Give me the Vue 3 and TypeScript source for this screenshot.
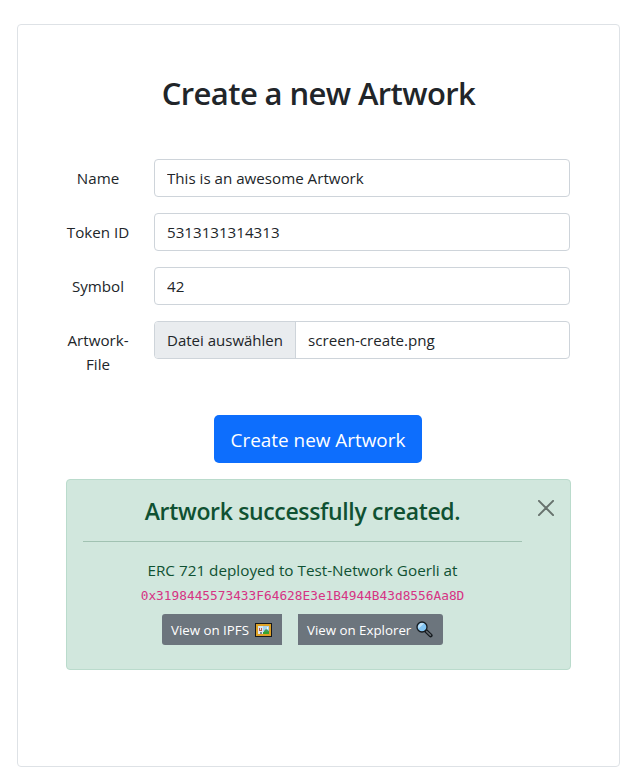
<script setup lang="ts">
import { ref } from 'vue'

interface Field {
  id: string
  label: string
  value: string
}

const fields = ref<Field[]>([
  { id: 'name', label: 'Name', value: 'This is an awesome Artwork' },
  { id: 'token', label: 'Token ID', value: '5313131314313' },
  { id: 'symbol', label: 'Symbol', value: '42' },
])
const fileName = ref('screen-create.png')
const address = ref('0x3198445573433F64628E3e1B4944B43d8556Aa8D')
const showAlert = ref(true)
</script>

<template>
  <main class="card">
    <h2 class="title"><span>Create a new Artwork</span></h2>

    <form class="form" @submit.prevent="showAlert = true">
      <div v-for="field in fields" :key="field.id" class="row">
        <label class="label" :for="field.id">{{ field.label }}</label>
        <input :id="field.id" v-model="field.value" class="control" type="text" />
      </div>
      <div class="row">
        <span class="label">Artwork-<br />File</span>
        <div class="control file">
          <button class="choose" type="button"><span>Datei auswählen</span></button>
          <span class="filename">{{ fileName }}</span>
        </div>
      </div>
      <button class="submit" type="submit"><span>Create new Artwork</span></button>
    </form>

    <section v-if="showAlert" class="alert">
      <h4 class="heading"><span>Artwork successfully created.</span></h4>
      <hr class="rule" />
      <p class="message"><span>ERC 721 deployed to Test-Network Goerli at</span></p>
      <code class="address">{{ address }}</code>
      <div class="actions">
        <button class="action ipfs" type="button">
          <span>View on IPFS</span>
          <svg class="frame" width="17" height="14" viewBox="0 0 17 14">
            <rect width="17" height="14" fill="#16191c" />
            <rect x="1" y="1" width="15" height="12" fill="#dda126" />
            <rect x="3" y="3" width="11" height="8" fill="#a9d4ee" />
            <path d="M3 3h5v2H3z" fill="#d2e8f3" />
            <path d="M9 8l2-2 3 2v3H9z" fill="#3f9d55" />
            <path d="M8 9h6v2H8z" fill="#35a52f" />
            <path d="M3 5h5v6H3z" fill="#e4e8ec" />
            <path d="M4 5h1v3H4zM6 5h1v3H6zM5 7h1v1H5z" fill="#b65b54" />
            <path d="M5 9h2v2H5z" fill="#7d8390" />
            <path d="M12 4h1v2h-1z" fill="#f3faff" />
          </svg>
        </button>
        <button class="action explorer" type="button">
          <span>View on Explorer</span>
          <svg class="lens" width="17" height="17" viewBox="0 0 17 17">
            <path d="M9.4 9.4l5.2 5" stroke="#151a1e" stroke-width="4" stroke-linecap="round" />
            <path d="M10.6 10.5l3.8 3.7" stroke="#646a70" stroke-width="1.7" stroke-linecap="round" />
            <circle cx="6" cy="6" r="5" fill="#83c5f3" stroke="#151a1e" stroke-width="1.3" />
            <path d="M2.4 7.7A4 4 0 0 1 8 2.6z" fill="#c2e3f8" />
          </svg>
        </button>
      </div>
      <button class="close" type="button" aria-label="Close" @click="showAlert = false">
        <svg width="16" height="16" viewBox="0 0 16 16">
          <path d="M.9.9l14.2 14.2M15.1.9L.9 15.1" stroke="#000" stroke-width="2" stroke-linecap="round" />
        </svg>
      </button>
    </section>
  </main>
</template>

<style>
body {
  background: #fff;
}
</style>

<style scoped>
.card,
.card * {
  box-sizing: border-box;
}

.card {
  width: 603px;
  height: 743px;
  margin: 24px 0 0 17px;
  padding: 49px 48px 48px;
  border: 1px solid #dee2e6;
  border-radius: 4px;
  color: #212529;
  font: 15.15px/24px 'Open Sans', 'Noto Sans', sans-serif;
}

button,
input {
  font: inherit;
  color: inherit;
}

.title {
  margin: 0 0 47px;
  font-size: 31px;
  font-weight: 600;
  letter-spacing: -0.6px;
  line-height: 38px;
  text-align: center;
  white-space: nowrap;
}

.form {
  display: flex;
  flex-direction: column;
  gap: 16px;
}

.row {
  display: grid;
  grid-template-columns: 64px 416px;
  column-gap: 24px;
  align-items: start;
}

.label {
  padding-top: 7px;
  text-align: center;
  white-space: nowrap;
}

.control {
  width: 100%;
  height: 38px;
  padding: 6px 12px;
  border: 1px solid #ced4da;
  border-radius: 4px;
  background: #fff;
  outline: none;
}

.file {
  display: flex;
  padding: 0;
  overflow: hidden;
}

.choose {
  width: 141px;
  padding: 0;
  border: 0;
  border-right: 1px solid #ced4da;
  background: #e9ecef;
  font-size: 15px;
  white-space: nowrap;
}

.filename {
  padding: 6px 12px;
}

.submit {
  align-self: center;
  width: 208px;
  height: 48px;
  margin: 23px 1px 0 0;
  padding: 2px 0 0;
  border: 0;
  border-radius: 5px;
  background: #0d6efd;
  color: #fff;
  font-size: 18.9px;
  white-space: nowrap;
}

.alert {
  position: relative;
  display: flex;
  flex-direction: column;
  align-items: center;
  width: 505px;
  height: 191px;
  margin-top: 16px;
  padding: 17px 48px 16px 16px;
  border: 1px solid #badbcc;
  border-radius: 4px;
  background: #d1e7dd;
  color: #0f5132;
}

.heading {
  margin: 0;
  font-size: 23px;
  font-weight: 600;
  letter-spacing: -0.34px;
  line-height: 29px;
  white-space: nowrap;
}

.rule {
  width: 439px;
  height: 1px;
  margin: 15px 0 16px;
  border: 0;
  background: #a1c2b2;
}

.message {
  margin: 0;
  font-size: 15.28px;
  white-space: nowrap;
}

.address {
  padding-top: 2px;
  color: #d63384;
  font: 12.8px/24px 'DejaVu Sans Mono', monospace;
}

.actions {
  display: flex;
  gap: 16px;
  margin-top: 6px;
}

.action {
  display: flex;
  align-items: center;
  justify-content: space-between;
  height: 31px;
  padding: 0 10px 0 9px;
  border: 0;
  background: #6c757d;
  color: #fff;
  font-size: 13.3px;
  white-space: nowrap;
}

.ipfs {
  width: 120px;
  border-radius: 3px 0 0 3px;
}

.explorer {
  width: 145px;
  border-radius: 0 3px 3px 0;
}

.close {
  position: absolute;
  top: 20px;
  right: 16px;
  display: flex;
  padding: 0;
  border: 0;
  background: none;
  opacity: 0.5;
}
</style>
